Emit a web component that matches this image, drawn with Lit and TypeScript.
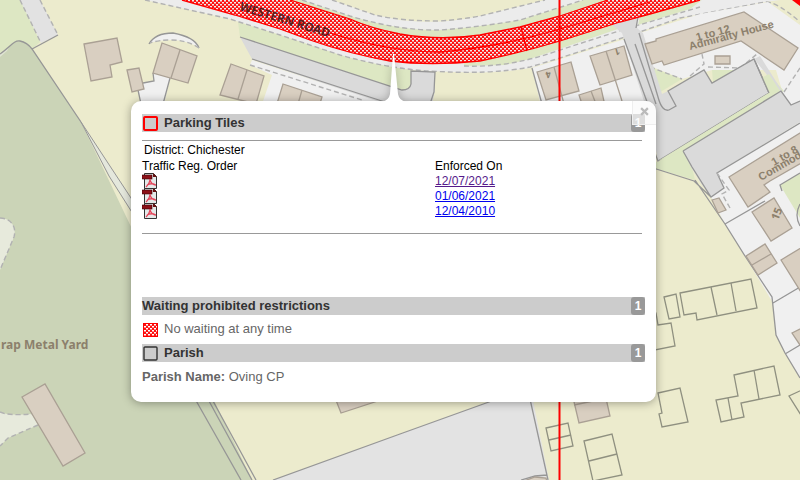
import { LitElement, html, css, svg } from "lit";
import { customElement } from "lit/decorators.js";

const road =
  "M182,0 L235,15 L280,29 L310,40 Q350,54 390,61 Q430,66 480,61 Q520,53 560,41 L620,22 L650,14 L700,0 L608,0 L560,16 L520,27 L480,35 Q440,41 400,34 Q370,28 350,19 L290,0 Z";

const buildings = [
  "84,44 117,38 122,62 110,65 112,77 91,81",
  "127,70 139,68 144,89 132,92",
  "162,43 197,56 188,83 153,73",
  "231,64 264,76 256,104 220,95",
  "283,84 322,97 318,110 275,110",
  "537,72 571,62 579,91 546,100",
  "590,56 624,46 632,75 600,85",
  "579,95 601,88 606,110 584,110",
  "645,44 656,41 656,39 744,12 798,48 784,70 741,41 664,65 662,61 652,64",
  "715,56 730,56 730,64 715,64",
  "729,177 805,130 805,161 770,181 764,185 770,192 748,207",
  "712,200 719,198 726,210 718,213",
  "752,212 774,198 792,228 771,241",
  "746,256 765,244 777,263 758,275",
  "781,260 804,246 804,297",
  "792,333 804,327 804,345 800,345",
  "22,397 45,384 85,453 63,466",
  "330,385 341,413 390,397",
  "570,385 603,385 610,416 579,423",
  "521,482 535,477 546,478 547,482",
];

const outlines = [
  "680,293 751,279 757,308 697,320 696,313 684,315",
  "664,297 676,294 680,317 669,319",
  "650,311 656,313 658,325 671,323 675,346 650,351",
  "658,393 680,388 688,422 662,427 659,414 662,413",
  "734,375 774,366 780,395 741,403 744,417 721,422 716,400 738,396",
  "546,428 568,423 573,446 551,451",
  "584,441 612,434 622,475 593,481",
  "804,389 789,396 804,420",
];

@customElement("map-canvas")
class MapCanvas extends LitElement {
  static styles = css`
    :host { display: block; }
    svg { display: block; width: 100%; height: 100%; }
    .bld { fill: #d9cfc1; stroke: #aaa094; stroke-width: 1.3; }
    .out { fill: none; stroke: #8f9080; stroke-width: 1.3; }
    .line { fill: none; stroke: #969696; stroke-width: 1.3; }
    .div { fill: none; stroke: #aaa094; stroke-width: 1.3; }
    .dash { fill: none; stroke: #b2b2b2; stroke-width: 1.4; stroke-dasharray: 5 3; }
    .green { fill: #dde7c3; }
    .white { fill: #f0f0f0; }
    .pave { fill: #ececec; }
    .grey { fill: #dadada; }
    .yard { fill: #cbd4b7; }
    .red { fill: none; stroke: #f00; stroke-width: 1.3; }
    .zone { fill: none; stroke: #f00; stroke-width: 2; }
    text { font-family: "Noto Sans", "Open Sans", sans-serif; font-weight: 700; font-size: 11px; fill: #8c806c; }
    .place { font-size: 12px; }
    .house { font-family: "Liberation Sans", Arial, sans-serif; font-size: 11px; }
    .street { fill: #5a2020; font-size: 12px; }
    .num { font-size: 9px; }
  `;

  render() {
    return html`<svg viewBox="0 0 800 480" preserveAspectRatio="xMidYMid slice" role="img" aria-label="Map">
      <defs>
        <pattern id="hatch" width="4" height="4" patternUnits="userSpaceOnUse">
          <rect width="4" height="4" fill="#f11" />
          <rect x="0" y="0" width="2" height="1.500" fill="#eee" />
          <rect x="2" y="2" width="2" height="1.500" fill="#eee" />
        </pattern>
      </defs>
      <rect width="800" height="480" fill="#ecebcd" />

      <path class="green" d="M0,0 H22 L40,42 L32,49 L20,41 L0,54 Z" />
      <path fill="#e2e2e2" d="M20,0 H40 L58,35 L41,43 Z" />
      <path class="dash" d="M20,0 L41,43 M40,0 L58,35" />
      <path class="line" d="M58,35 L32,49" />
      <path class="yard" d="M0,54 C10,47 14,40 20,41 C26,42 29,45 32,49 L81,122 L252,480 H0 Z" />
      <path fill="#dfe3d3" d="M0,54 L9,47 L7,51 L0,57 Z" />
      <path class="line" d="M0,54 C10,47 14,40 20,41 C26,42 29,45 32,49 L81,122" />
      <path fill="#e4e7dc" stroke="#969696" d="M81,122 L131,198 L140,213 V225 L109,176 Z" />
      <path class="line" d="M190,390 L241,480 M203,390 L252,480 M207,390 L256,480" />
      <path fill="#e7eadc" d="M0,218 C10,218 17,226 14,237 L0,270 Z" />
      <path class="dash" d="M0,218 C10,218 17,226 14,237 L0,270" />
      <path fill="#e7eadc" d="M0,412 Q8,416 32,414 L38,425 L8,438 L0,446 Z" />
      <path class="dash" d="M0,412 Q8,416 32,414 M38,425 L8,438 L0,446" />

      <path class="pave" d="M145,0 L230,19 L280,35 L340,55 Q390,70 430,71 Q490,75 530,68 L560,58 L622,38 L680,18 L765,2 L780,0 H545 L480,16 Q440,25 400,20 L375,15 L332,0 Z" />
      <path class="green" d="M302,0 L350,16 Q400,31 440,30 Q480,27 520,20 L575,3 L583,0 H612 L560,17 L480,37 L430,42 L350,24 L280,0 Z" />
      <path class="green" d="M238,22 L280,35 L340,55 Q370,64 411,70 V84 Q409,90 402,90 L240,37 Z" />
      <path class="green" d="M464,62 L530,49 L612,24 L618,29 L530,59 L505,65 L464,66 Z" />
      <path class="green" d="M640,16 L702,0 L690,9 L638,25 Z" />
      <path class="dash" d="M145,0 L230,19 L280,35 L340,55 Q390,69 430,71 Q490,75 530,67 L560,58 L622,38 L680,18 L765,2 Q776,1 800,22" />
      <path class="dash" d="M302,0 L350,16 Q400,31 440,30 Q480,27 520,20 L583,0" />
      <path class="dash" d="M332,0 L375,15 Q400,21 440,21 Q465,19 480,16 L545,0" />
      <path class="dash" d="M464,66 Q510,68 560,50 L622,30 L700,7" />

      <path class="grey" d="M240,37 L402,90 Q410,90 411,84 V71 L435,72 V90 L431,110 H400 L252,59 Z" />
      <path class="line" d="M240,37 L402,90 Q410,90 411,84 V71 L435,72 L434,92 L430,104 M252,59 L385,102" />
      <path class="white" d="M252,60 L380,102 L320,104 L262,104 L272,75 L250,65 Z" />
      <path class="dash" d="M250,65 L362,100" />

      <path class="white" d="M153,73 L154,81 L143,83 L138,90 L141,104 L164,104 L170,78 Z" />
      <path class="line" d="M153,73 L154,81 L143,83 M138,90 L141,104 M170,78 L163,104" />
      <path fill="#f0f0f0" d="M150,43 Q155,33 173,33 Q195,37 199,48 Q187,40 171,40 Q158,40 150,43" />
      <path class="line" d="M149,44 Q155,33 173,33 Q195,37 199,48" />
      <path class="dash" d="M199,48 Q187,40 171,40 Q158,40 150,43" />

      <path class="white" d="M532,68 L625,39 L652,110 H542 Z" />
      <path class="line" d="M532,68 L542,104" />
      <path class="white" d="M640,33 L700,14 L768,2 L800,25 V125 L786,104 L776,70 L712,70 L682,79 L650,66 Z" />
      <path class="green" d="M650,67 L682,79 L657,94 Z M712,70 L736,70 L713,82 Z" />
      <path class="dash" d="M650,67 L682,79 M690,76 L704,64 L702,54 M708,67 L740,68 L757,54 M784,92 L800,68" />
      <path class="grey" d="M612,25 L638,17 L637,28 L643,33 L662,94 L668,91 L704,70 L712,83 L754,59 L769,93 L658,161 L650,120 L624,39 L622,33 Z" />
      <path class="line" d="M638,17 L636,28 M624,39 L650,110 M639,33 L658,97 Q662,112 669,110 L676,106 L668,91 L704,70 L712,83 L754,59 L769,93 L658,161 L650,140 M635,44 L656,104" />
      <path class="green" d="M762,78 L769,74 L784,91 L683,151 L692,167 L695,180 L650,167 V162 H658 L769,93 Z" />
      <path class="grey" d="M683,151 L780,91 L754,59 L760,56 L791,105 L800,101 V122 L717,173 L724,188 L711,197 L702,185 L691,167 Z" />
      <path class="green" d="M762,78 L769,74 L780,91 L683,151 L658,161 L769,93 Z" />
      <path class="white" d="M717,173 L800,122 V378 L785,353 L776,335 L773,303 L745,256 L725,224 L711,197 L724,188 Z" />
      <path class="green" d="M780,185 L800,173 V218 Z" />
      <path class="line" d="M650,167 L694,181 L711,197 M683,151 L781,91 L791,105 L800,101 M754,59 L769,93 M683,151 L692,167 L711,197 L724,188 L717,173 L800,123 M695,180 L725,224 L745,256 L772,297 L776,335 L785,353 L800,378 M725,224 L765,201 M773,303 L800,287 M785,354 L800,345 M782,191 L780,185 L800,173 M800,204 Q794,215 800,226" />
      <path class="dash" d="M717,173 L729,190 L722,194 L730,208" />

      <path fill="#e3e3e3" d="M273,480 L400,434 L488,402 L531,390 L549,480 Z" />
      <path class="line" d="M273,480 L400,434 L500,398 M528,390 L548,480 M521,480 L535,476 L547,475" />

      ${buildings.map((p) => svg`<polygon class="bld" points=${p} />`)}
      ${outlines.map((p) => svg`<polygon class="out" points=${p} />`)}
      <path class="div" d="M180,50 L171,78 M247,70 L238,99 M302,90 L298,104 M554,67 L564,104 M606,51 L622,101 M591,91 L596,104 M752,265 L771,254 M574,405 L607,398" />
      <path class="out" d="M711,287 L717,315 M731,283 L736,311 M754,370 L759,399 M728,398 L732,420 M549,440 L571,435 M589,461 L617,454" />

      <path d=${road} fill="url(#hatch)" />
      <path class="red" d="M182,0 L235,15 L280,29 L310,40 Q350,54 390,61 Q430,66 480,61 Q520,53 560,41 L620,22 L650,14 L700,0 M608,0 L560,16 L520,27 L480,35 Q440,41 400,34 Q370,28 350,19 L290,0 M330,33 Q390,52 440,52 Q500,47 560,29 L650,2 M521,27 L527,51" />
      <path d="M792,0 H800 V6 Z" fill="#f00" />
      <path class="zone" d="M559.5,0 V480" />

      <text class="place" x="1" y="349">rap Metal Yard</text>
      <text class="street" transform="translate(239 10) rotate(17)">WESTERN ROAD</text>
      <text class="house" transform="translate(690 50) rotate(-15)">Admiralty House</text>
      <text class="house" transform="translate(697 41) rotate(-15)">1 to 12</text>
      <text class="house" transform="translate(774 166) rotate(-30)">1 to 8</text>
      <text class="house" transform="translate(761 181) rotate(-30)">Commodore House</text>
      <text transform="translate(778 221) rotate(-68)">15</text>
      <text class="num" transform="translate(550 71) rotate(165)">4</text>
      <text class="num" transform="translate(619 48) rotate(165)">1</text>
    </svg>`;
  }
}

interface Order { date: string; visited: boolean; }

const orders: Order[] = [
  { date: "12/07/2021", visited: true },
  { date: "01/06/2021", visited: false },
  { date: "12/04/2010", visited: false },
];

const pdfIcon = html`<svg class="pdf" viewBox="0 0 16 16" role="img" aria-label="PDF">
  <path d="M2.500,.5 H11.500 L14.500,3.500 V15.500 H2.500 Z" fill="#e4eaea" stroke="#333" />
  <path d="M11,0 L15,4 H11 Z" fill="#611" />
  <rect x="0" y="2" width="10" height="4" fill="#8c1018" stroke="#3a0508" stroke-width=".6" />
  <path d="M8,6 C8,10 6,12 4,14 M8,7 C9,10 11,12 14,12 M5,12 C8,10.500 11,10.500 13,11.500" fill="none" stroke="#e4455a" stroke-width="1.300" />
</svg>`;

const hatchIcon = html`<svg class="swatch" viewBox="0 0 17 18" aria-hidden="true">
  <defs>
    <pattern id="weave" width="4" height="4" patternUnits="userSpaceOnUse">
      <rect width="4" height="4" fill="#f11" />
      <rect width="2" height="1.500" fill="#fff" /><rect x="2" y="2" width="2" height="1.500" fill="#fff" />
    </pattern>
  </defs>
  <rect x="1" y="3" width="15" height="14" fill="url(#weave)" />
  <rect x="1.500" y="3.500" width="14" height="13" fill="none" stroke="#f00" />
</svg>`;

const boxIcon = (color: string, inset: number, width: number) => html`<svg class="swatch" viewBox="0 0 17 18" aria-hidden="true">
  <rect x=${inset} y=${inset + 1} width=${17 - 2 * inset} height=${17 - 2 * inset} rx="1" fill="none" stroke=${color} stroke-width=${width} />
</svg>`;

@customElement("app-root")
class AppRoot extends LitElement {
  static styles = css`
    :host {
      display: block;
      position: relative;
      min-height: 100vh;
      overflow: hidden;
      font-family: "Liberation Sans", Arial, sans-serif;
      font-size: 13px;
      color: #666;
    }
    .map { position: absolute; inset: 0; }
    .popup {
      position: absolute;
      left: 131px;
      top: 101px;
      width: 525px;
      box-sizing: border-box;
      padding: 13px 11px 16px;
      background: #fff;
      border-radius: 10px;
      box-shadow: 0 1px 10px rgba(0, 0, 0, 0.35);
    }
    .tip { position: absolute; left: 251px; top: -49px; width: 24px; height: 50px; filter: drop-shadow(0 0 4px rgba(0, 0, 0, 0.25)); clip-path: inset(0 -8px 0 -8px); }
    .close {
      position: absolute;
      top: 0;
      right: 0;
      width: 24px;
      height: 24px;
      padding: 0 1px 3px 0;
      display: grid;
      place-items: center;
      border: 0;
      border-left: 1px solid #eee;
      border-bottom: 1px solid #eee;
      border-radius: 0 10px 0 0;
      background: rgba(250, 250, 250, 0.7);
    }
    .close svg { width: 9px; height: 9px; }
    .head {
      display: flex;
      align-items: center;
      height: 18px;
      margin: 0;
      background: #ccc;
      color: #333;
      font-size: 13px;
      line-height: 18px;
      font-weight: 700;
    }
    .swatch { width: 17px; height: 18px; margin-right: 5px; flex: none; }
    .count {
      margin-left: auto;
      width: 14px;
      border-radius: 3px;
      background: #999;
      color: #fff;
      font-size: 12px;
      line-height: 18px;
      text-align: center;
    }
    .detail {
      margin: 8px 3px 63px 0;
      padding: 1px 0 14px;
      border: solid #999;
      border-width: 1px 0;
      color: #000;
      font-size: 12px;
    }
    .detail p { margin: 0 2px; line-height: 16px; }
    table { width: 100%; table-layout: fixed; border-collapse: collapse; }
    th { padding: 0; text-align: left; font-weight: 400; line-height: 16px; height: 16px; }
    td { padding: 0; height: 15px; line-height: 15px; vertical-align: top; }
    .order { width: 293px; }
    .pdf { display: block; width: 16px; height: 16px; margin: -1px 0 0; }
    a { color: #00e; }
    a.visited { color: #551a8b; }
    .row { display: flex; align-items: center; box-sizing: border-box; height: 29px; margin: 0; padding-bottom: 2px; line-height: 27px; }
    .attr { margin: 0; padding-top: 6px; line-height: 18px; }
  `;

  render() {
    return html`
      <map-canvas class="map"></map-canvas>
      <section class="popup" role="dialog" aria-label="Feature information">
        <svg class="tip" viewBox="0 0 24 50" aria-hidden="true">
          <path d="M11,2 H12 L16,42 Q17,48 24,50 H0 Q7,48 8,42 Z" fill="#fff" />
        </svg>
        <h2 class="head">${boxIcon("#f00", 2, 2)}Parking Tiles<span class="count">1</span></h2>
        <div class="detail">
          <p>District: Chichester</p>
          <table>
            <thead>
              <tr><th class="order" scope="col">Traffic Reg. Order</th><th scope="col">Enforced On</th></tr>
            </thead>
            <tbody>
              ${orders.map((o) => html`<tr>
                <td>${pdfIcon}</td>
                <td><a class=${o.visited ? "visited" : ""} href="#">${o.date}</a></td>
              </tr>`)}
            </tbody>
          </table>
        </div>
        <h2 class="head">Waiting prohibited restrictions<span class="count">1</span></h2>
        <p class="row">${hatchIcon}No waiting at any time</p>
        <h2 class="head">${boxIcon("#333", 2, 1.4)}Parish<span class="count">1</span></h2>
        <p class="attr"><b>Parish Name:</b> Oving CP</p>
        <button class="close" aria-label="Close">
          <svg viewBox="0 0 8 8"><path d="M1,1 L7,7 M7,1 L1,7" stroke="#bbb" stroke-width="2" /></svg>
        </button>
      </section>
    `;
  }
}
